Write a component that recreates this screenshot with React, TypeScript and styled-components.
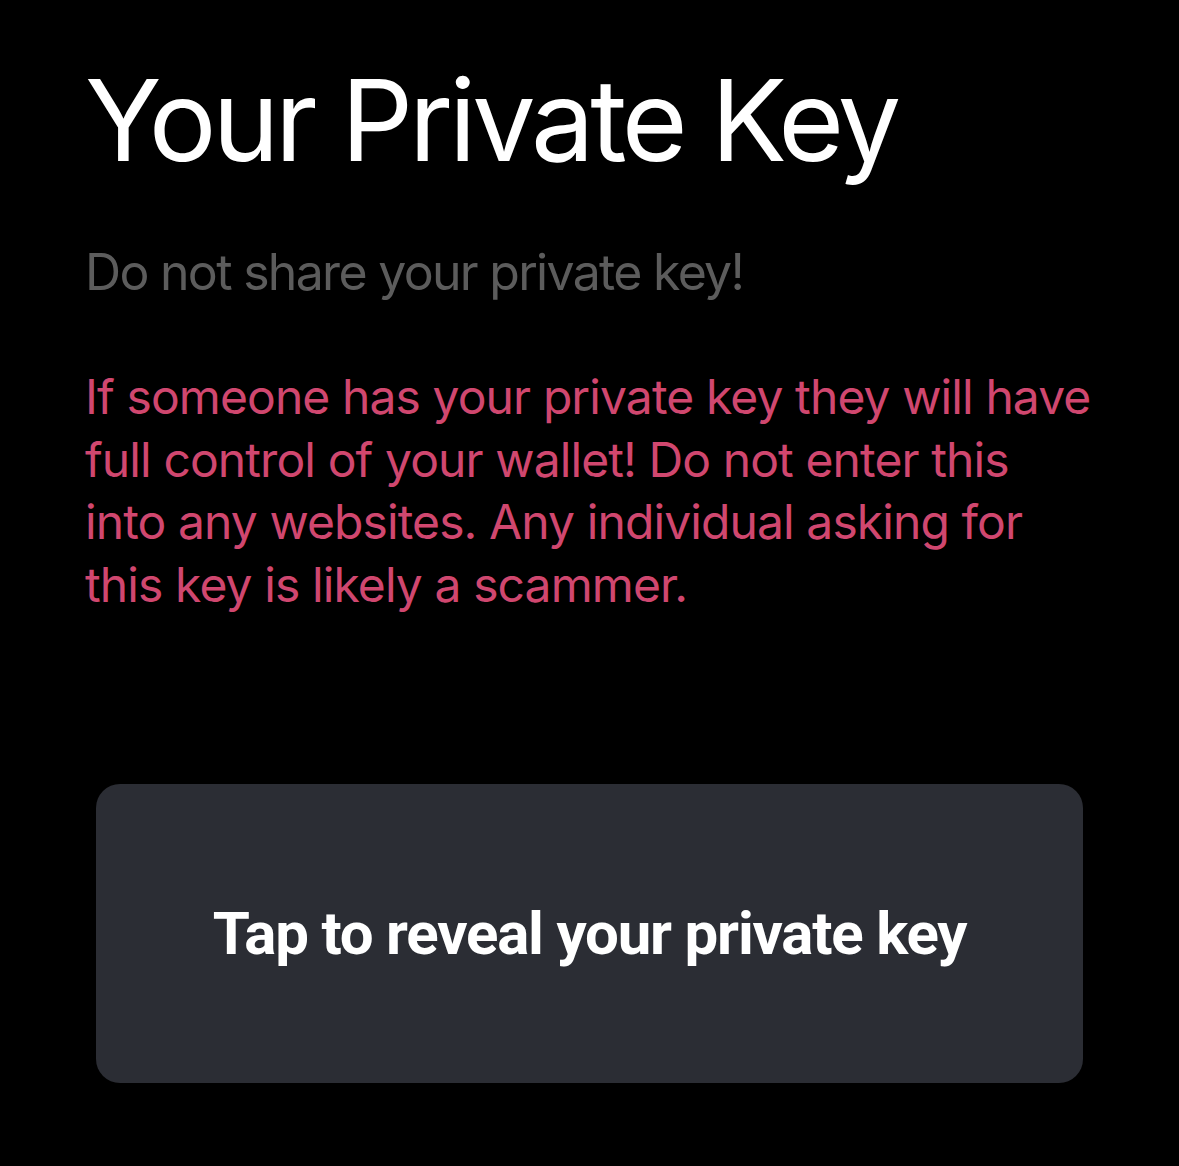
import React from "react";
import styled, { createGlobalStyle } from "styled-components";

const Global = createGlobalStyle`
  html, body { margin: 0; padding: 0; background: #000; }
  body { font-family: Inter, "Noto Sans", sans-serif; -webkit-font-smoothing: antialiased; }
`;

const Page = styled.div`
  min-height: 1166px;
  background: #000;
  display: flex;
  flex-direction: column;
  padding: 64px 0 0;
  box-sizing: border-box;
`;

const TextBlock = styled.div`
  padding: 0 78px 0 85px;
  display: flex;
  flex-direction: column;
`;

const Title = styled.h1`
  margin: 0;
  font-size: 113px;
  line-height: 113px;
  font-weight: 400;
  color: #fff;
  letter-spacing: -4.2px;
`;

const Subtitle = styled.p`
  margin: 70px 0 0;
  font-size: 50px;
  line-height: 50px;
  font-weight: 400;
  color: #5c5c5c;
  letter-spacing: -1.7px;
`;

const Warning = styled.p`
  margin: 69px 0 0;
  font-size: 48px;
  line-height: 62.5px;
  font-weight: 400;
  color: #d0476f;
  letter-spacing: -0.9px;
`;

const RevealButton = styled.button`
  margin: 168px 96px 0 96px;
  height: 299px;
  border: none;
  border-radius: 24px;
  background: #2b2d34;
  color: #fff;
  font-family: Roboto, Inter, sans-serif;
  font-size: 60px;
  font-weight: 700;
  letter-spacing: -1.2px;
  display: flex;
  align-items: center;
  justify-content: center;
  cursor: pointer;
`;

export default function App() {
  return (
    <>
      <Global />
      <Page>
        <TextBlock>
          <Title>Your Private Key</Title>
          <Subtitle>Do not share your private key!</Subtitle>
          <Warning>
            If someone has your private key they will have full control of your
            wallet! Do not enter this into any websites. Any individual asking
            for this key is likely a scammer.
          </Warning>
        </TextBlock>
        <RevealButton>Tap to reveal your private key</RevealButton>
      </Page>
    </>
  );
}
